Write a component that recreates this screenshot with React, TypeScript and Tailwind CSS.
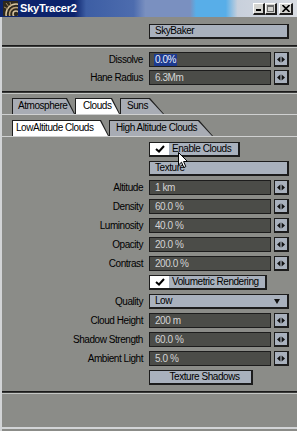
import React from "react";

const FIELD_ROWS_A = [
  { label: "Altitude", value: "1 km" },
  { label: "Density", value: "60.0 %" },
  { label: "Luminosity", value: "40.0 %" },
  { label: "Opacity", value: "20.0 %" },
  { label: "Contrast", value: "200.0 %" },
];

const FIELD_ROWS_B = [
  { label: "Cloud Height", value: "200 m" },
  { label: "Shadow Strength", value: "60.0 %" },
  { label: "Ambient Light", value: "5.0 %" },
];

function Separator() {
  return (
    <div className="flex flex-col">
      <div className="h-[1px] bg-[#1a1a1a]" />
      <div className="h-[1px] bg-[#3a3b39]" />
      <div className="h-[1px] bg-[#c4c6c4]" />
    </div>
  );
}

function Stepper() {
  return (
    <div className="ml-[3px] flex h-full w-[15px] items-center justify-center border border-b-2 border-r-2 border-[#1c1c1c] bg-[#a9b1bd]">
      <svg width="8" height="7" viewBox="0 0 8 7">
        <path d="M0 3.5 L3.4 0.5 L3.4 6.5 Z" fill="#111" />
        <path d="M8 3.5 L4.6 0.5 L4.6 6.5 Z" fill="#111" />
      </svg>
    </div>
  );
}

function Label({ text }: { text: string }) {
  return <div className="w-[142px] pr-[1px] text-right whitespace-nowrap">{text}</div>;
}

function FieldRow({ label, value, selected }: { label: string; value: string; selected?: boolean }) {
  return (
    <div className="flex h-[15px] items-center">
      <Label text={label} />
      <div className="ml-[5px] flex h-full w-[122px] items-center border border-[#1c1c1c] bg-[#4b4c48] pl-[4px] text-[#d4d4d4]">
        {selected ? (
          <span className="bg-[#1d3a8e] px-[1px] py-[1px] text-[#e8eeff]">{value}</span>
        ) : (
          <span className="pl-[1px]">{value}</span>
        )}
      </div>
      <Stepper />
    </div>
  );
}

function Button({ text, className }: { text: string; className: string }) {
  return (
    <div className={`flex h-[15px] items-center whitespace-nowrap border border-b-2 border-r-2 border-[#1c1c1c] bg-[#a9b1bd] ${className}`}>
      {text}
    </div>
  );
}

function CheckButton({ text, width }: { text: string; width: string }) {
  return (
    <div className="flex h-[15px] items-center">
      <div className="w-[147px]" />
      <div className={`flex h-full items-stretch border border-b-2 border-r-2 border-[#1c1c1c] bg-[#a9b1bd] ${width}`}>
        <div className="flex w-[19px] items-center justify-center bg-white">
          <svg width="10" height="8" viewBox="0 0 10 8">
            <path d="M1 4 L4 6.5 L9 1" fill="none" stroke="#000" strokeWidth="2" />
          </svg>
        </div>
        <div className="flex items-center whitespace-nowrap pl-[3px]">{text}</div>
      </div>
    </div>
  );
}

function Tab({ label, active, className, clip, inner }: { label: string; active?: boolean; className: string; clip: string; inner: string }) {
  return (
    <div className={`relative h-[16px] ${className}`}>
      <div className={`absolute inset-0 bg-[#1e1e1e] ${clip}`} />
      <div className={`absolute bottom-0 left-[1px] right-0 top-[1px] ${inner} ${active ? "bg-white" : "bg-[#a8acb4]"}`} />
      <div className="relative flex h-full items-center whitespace-nowrap">{label}</div>
    </div>
  );
}

const CLIP8 = "[clip-path:polygon(0_0,calc(100%_-_8px)_0,100%_100%,0_100%)]";
const INNER8 = "[clip-path:polygon(0_0,calc(100%_-_9px)_0,calc(100%_-_1px)_100%,0_100%)]";
const CLIP14 = "[clip-path:polygon(0_0,calc(100%_-_14px)_0,100%_100%,0_100%)]";
const INNER14 = "[clip-path:polygon(0_0,calc(100%_-_15px)_0,calc(100%_-_1px)_100%,0_100%)]";

function TitleBar() {
  return (
    <div className="flex h-[17px] items-center bg-[linear-gradient(to_right,#0c236c_0%,#0c236c_25%,#3d5ea4_29%,#4d6cae_45%,#7a90c0_49%,#7a90c0_64%,#58aee8_66%,#58aee8_76%,#c8d0dc_80%,#d8dce2_100%)] pl-[3px] pr-[4px]">
      <svg width="15" height="15" viewBox="0 0 15 15">
        <rect width="15" height="15" fill="#2e281d" />
        <circle cx="13" cy="13" r="3" fill="none" stroke="#d8c6a2" strokeWidth="1.5" />
        <circle cx="13" cy="13" r="6.5" fill="none" stroke="#bca27a" strokeWidth="1.5" />
        <circle cx="13" cy="13" r="10" fill="none" stroke="#d8c6a2" strokeWidth="1.5" />
        <path d="M1 6 L5 8 M3 2 L6 6 M7 1 L8 5" stroke="#a08a66" strokeWidth="1" />
      </svg>
      <span className="ml-[2px] text-[11px] font-bold tracking-[-0.2px] text-white">SkyTracer2</span>
      <div className="ml-auto flex items-center">
        <div className="flex h-[12px] w-[12px] items-end justify-center border border-b-2 border-r-2 border-[#1e1e1e] border-l-white border-t-white bg-[#d4d4d0] pb-[2px]">
          <div className="h-[2px] w-[5px] bg-black" />
        </div>
        <div className="flex h-[12px] w-[12px] items-center justify-center border border-b-2 border-r-2 border-[#1e1e1e] border-l-white border-t-white bg-[#d4d4d0]">
          <div className="h-[7px] w-[7px] border border-t-2 border-[#6a6a6a]" />
        </div>
        <div className="ml-[2px] flex h-[12px] w-[14px] items-center justify-center border border-b-2 border-r-2 border-[#1e1e1e] border-l-white border-t-white bg-[#d4d4d0]">
          <svg width="8" height="7" viewBox="0 0 8 7">
            <path d="M0.5 0 L7.5 7 M7.5 0 L0.5 7" stroke="#000" strokeWidth="1.6" />
          </svg>
        </div>
      </div>
    </div>
  );
}

export default function App() {
  return (
    <div className="relative flex h-[431px] w-[297px] flex-col overflow-hidden bg-[#8b8c88] font-['Liberation_Sans',Arial,sans-serif] text-[10px] leading-none tracking-[-0.45px] text-black">
      <TitleBar />
      <div className="flex flex-1 flex-col border-l-2 border-[#d2d4d6]">
        <div className="mt-[7px] flex">
          <Button text="SkyBaker" className="ml-[147px] w-[140px] pl-[5px]" />
        </div>
        <div className="mt-[6px]">
          <Separator />
        </div>
        <div className="mt-[4px] flex flex-col gap-[3px]">
          <FieldRow label="Dissolve" value="0.0%" selected />
          <FieldRow label="Hane Radius" value="6.3Mm" />
        </div>
        <div className="mt-[6px]">
          <Separator />
        </div>

        <div className="mt-[4px] flex pl-[10px]">
          <Tab label="Atmosphere" className="w-[63px] pl-[6px]" clip={CLIP8} inner={INNER8} />
          <Tab label="Clouds" active className="w-[45px] pl-[8px]" clip={CLIP8} inner={INNER8} />
          <Tab label="Suns" className="w-[44px] pl-[7px]" clip={CLIP14} inner={INNER14} />
        </div>
        <div className="h-[1px] bg-[#cfd0d0]" />

        <div className="mt-[5px] flex pl-[10px]">
          <Tab label="LowAltitude Clouds" active className="w-[97px] pl-[4px]" clip={CLIP8} inner={INNER8} />
          <Tab label="High Altitude Clouds" className="w-[104px] pl-[7px]" clip={CLIP14} inner={INNER14} />
        </div>
        <div className="h-[1px] bg-[#cfd0d0]" />

        <div className="mt-[5px] flex flex-col gap-[4px]">
          <CheckButton text="Enable Clouds" width="w-[91px]" />
          <div className="flex">
            <Button text="Texture" className="ml-[147px] w-[140px] pl-[5px]" />
          </div>
          {FIELD_ROWS_A.map((r) => (
            <FieldRow key={r.label} label={r.label} value={r.value} />
          ))}
          <CheckButton text="Volumetric Rendering" width="w-[118px]" />
          <div className="flex h-[15px] items-center">
            <Label text="Quality" />
            <div className="ml-[5px] flex h-full w-[140px] items-center border border-b-2 border-r-2 border-[#1c1c1c] bg-[#a9b1bd] pl-[5px] pr-[7px]">
              <span>Low</span>
              <svg className="ml-auto" width="6" height="5" viewBox="0 0 6 5">
                <path d="M0 0 H6 L3 5 Z" fill="#111" />
              </svg>
            </div>
          </div>
          {FIELD_ROWS_B.map((r) => (
            <FieldRow key={r.label} label={r.label} value={r.value} />
          ))}
          <div className="flex">
            <Button text="Texture Shadows" className="ml-[147px] w-[104px] justify-center pl-[8px]" />
          </div>
        </div>
        <div className="mt-[6px]">
          <Separator />
        </div>
        <div className="flex-1" />
        <div className="h-[2px] bg-[#d2d4d6]" />
        <div className="h-[2px] bg-[#8b8c88]" />
      </div>

      <svg className="absolute left-[178px] top-[152px]" width="11" height="17" viewBox="0 0 11 17">
        <path d="M0.5 0.5 L0.5 13 L3.5 10.2 L5.8 15.5 L7.8 14.6 L5.6 9.5 L9.5 9.5 Z" fill="#fff" stroke="#000" strokeWidth="1" />
      </svg>
    </div>
  );
}
